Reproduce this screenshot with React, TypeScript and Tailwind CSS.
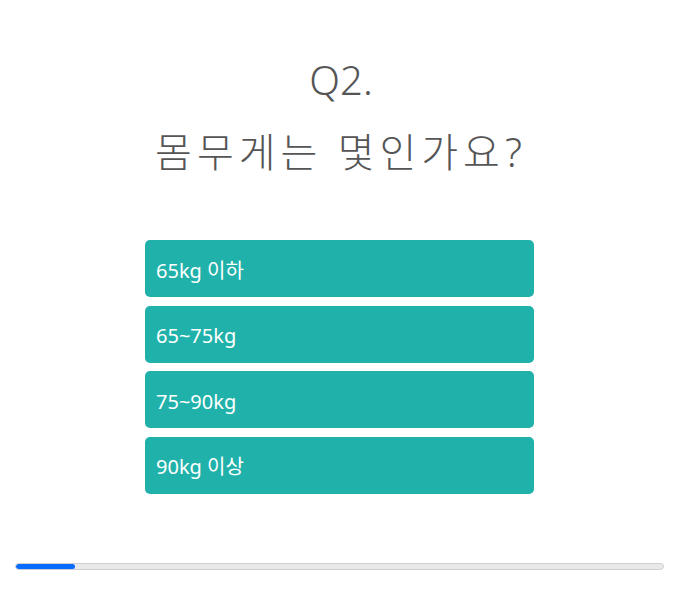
const options = ['65kg 이하', '65~75kg', '75~90kg', '90kg 이상']

export default function App() {
  return (
    <div
      className="min-h-[611px] w-full bg-white"
      style={{ fontFamily: '"Noto Sans", "Noto Sans CJK KR", sans-serif' }}
    >
      <div className="pt-[44px] text-center text-[40px] font-light leading-[72px] text-[#555555]">
        <div>Q2.</div>
        <div className="tracking-[5px]">몸무게는 몇인가요?</div>
      </div>

      <div className="ml-[145px] mt-[52px] flex w-[389px] flex-col gap-[8.5px]">
        {options.map((o) => (
          <button
            key={o}
            className="flex h-[57px] items-center rounded-[5px] bg-[#20b2aa] px-[11px] pt-[4px] text-left text-[20px] text-white"
          >
            {o}
          </button>
        ))}
      </div>

      <div className="ml-[15px] mt-[69px] h-[7px] w-[649px] overflow-hidden rounded-full border border-[#cfcfcf] bg-[#e9e9e9]">
        <div className="h-full w-[59px] rounded-full bg-[#0a6cff]" />
      </div>
    </div>
  )
}
